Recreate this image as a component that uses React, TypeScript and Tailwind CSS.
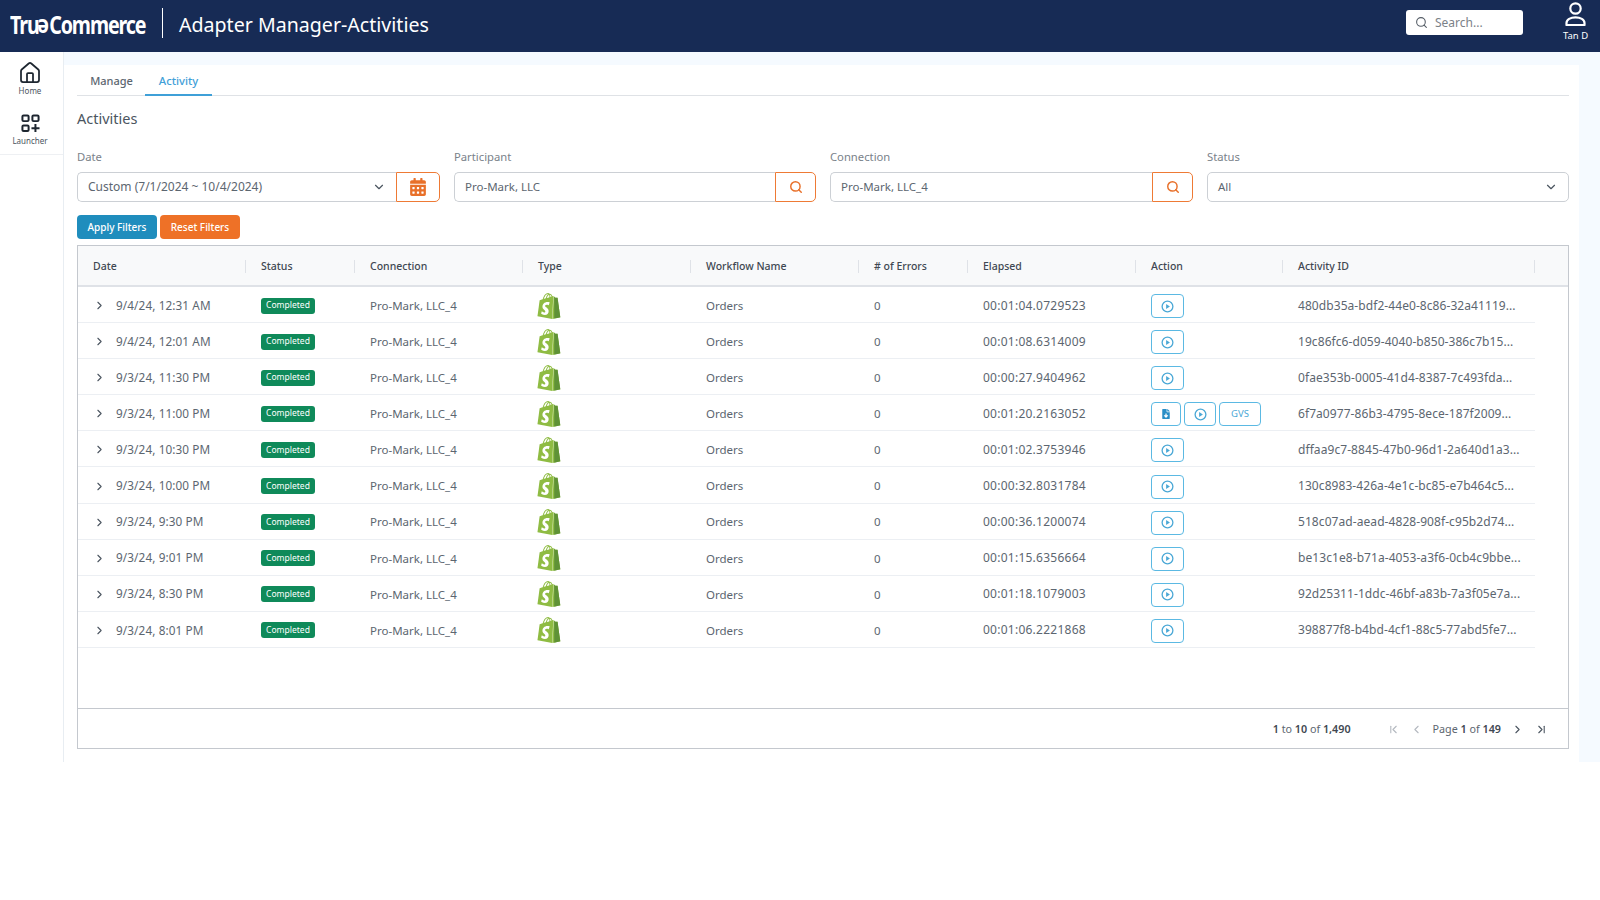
import {
  ChevronDown,
  ChevronFirst,
  ChevronLast,
  ChevronLeft,
  ChevronRight,
  House,
  Search,
} from 'lucide-react';
import { FaCalendarAlt, FaFileDownload } from 'react-icons/fa';
import { SiShopify } from 'react-icons/si';

const COLS = 'grid grid-cols-[168px_109px_168px_168px_168px_109px_168px_147px_252px]';

const HEADERS = [
  'Date',
  'Status',
  'Connection',
  'Type',
  'Workflow Name',
  '# of Errors',
  'Elapsed',
  'Action',
  'Activity ID',
];

const ROWS = [
  { date: '9/4/24, 12:31 AM', elapsed: '00:01:04.0729523', id: '480db35a-bdf2-44e0-8c86-32a41119...' },
  { date: '9/4/24, 12:01 AM', elapsed: '00:01:08.6314009', id: '19c86fc6-d059-4040-b850-386c7b15...' },
  { date: '9/3/24, 11:30 PM', elapsed: '00:00:27.9404962', id: '0fae353b-0005-41d4-8387-7c493fda...' },
  { date: '9/3/24, 11:00 PM', elapsed: '00:01:20.2163052', id: '6f7a0977-86b3-4795-8ece-187f2009...', extra: true },
  { date: '9/3/24, 10:30 PM', elapsed: '00:01:02.3753946', id: 'dffaa9c7-8845-47b0-96d1-2a640d1a3...' },
  { date: '9/3/24, 10:00 PM', elapsed: '00:00:32.8031784', id: '130c8983-426a-4e1c-bc85-e7b464c5...' },
  { date: '9/3/24, 9:30 PM', elapsed: '00:00:36.1200074', id: '518c07ad-aead-4828-908f-c95b2d74...' },
  { date: '9/3/24, 9:01 PM', elapsed: '00:01:15.6356664', id: 'be13c1e8-b71a-4053-a3f6-0cb4c9bbe...' },
  { date: '9/3/24, 8:30 PM', elapsed: '00:01:18.1079003', id: '92d25311-1ddc-46bf-a83b-7a3f05e7a...' },
  { date: '9/3/24, 8:01 PM', elapsed: '00:01:06.2221868', id: '398877f8-b4bd-4cf1-88c5-77abd5fe7...' },
];

function PlayIcon() {
  return (
    <svg viewBox="0 0 14 14" className="h-[13px] w-[13px]" fill="none">
      <circle cx="7" cy="7" r="5.8" stroke="currentColor" strokeWidth="1.4" />
      <path d="M5.5 4.4 9.6 7l-4.1 2.6z" fill="currentColor" />
    </svg>
  );
}

function FilterField({ label, value, width }: { label: string; value: string; width: string }) {
  return (
    <div className={`flex flex-col ${width}`}>
      <label className="mb-[7px] text-[11.25px] leading-[16px] text-[#7a828a]">{label}</label>
      <div className="flex h-[30px]">
        <div className="flex flex-1 items-center rounded-l-[5px] border border-r-0 border-[#ccd0d5] pl-[10px] text-[11.5px] text-[#5c6670]">
          {value}
        </div>
        <button className="flex w-[41px] items-center justify-center rounded-r-[5px] border border-[#ee7a35] text-[#e8702a]">
          <Search className="h-[14px] w-[14px]" strokeWidth={2.5} />
        </button>
      </div>
    </div>
  );
}

function ActionButton({ children, width = 'w-[33px]' }: { children: React.ReactNode; width?: string }) {
  return (
    <button className={`flex h-[24px] ${width} items-center justify-center rounded-[4px] border border-[#5bb9e3] text-[#4ba8d6]`}>
      {children}
    </button>
  );
}

function ShopifyMark() {
  return (
    <span className="relative block h-[26px] w-[26px] -ml-[2px]">
      <SiShopify className="h-[26px] w-[26px] text-[#8fbc43]" />
      <SiShopify className="absolute left-0 top-0 h-[26px] w-[26px] text-[#5f9236] [clip-path:inset(0_0_0_70%)]" />
    </span>
  );
}

function ActivityRow({ row }: { row: (typeof ROWS)[number] }) {
  const cell = 'flex items-center pl-[15px] truncate';
  return (
    <div className={`${COLS} h-[36.1px] w-[1457px] border-b border-[#eceff3] pt-[2px] text-[11.5px] text-[#5c6670]`}>
      <div className="flex items-center pl-[15px]">
        <ChevronRight className="h-[13px] w-[13px] text-[#4b5560]" strokeWidth={2} />
        <span className="ml-[10px] whitespace-nowrap text-[11.75px] tracking-[0.1px]">{row.date}</span>
      </div>
      <div className={cell}>
        <span className="flex h-[16px] w-[54px] items-center justify-center rounded-[3px] bg-[#0f8a5a] text-[8.5px] text-white">
          Completed
        </span>
      </div>
      <div className={cell}>Pro-Mark, LLC_4</div>
      <div className={cell}>
        <ShopifyMark />
      </div>
      <div className={cell}>Orders</div>
      <div className={cell}>0</div>
      <div className={`${cell} text-[12px] tracking-[0.25px]`}>{row.elapsed}</div>
      <div className="flex items-center gap-[3px] pl-[15px] pt-[1px]">
        {row.extra && (
          <ActionButton width="w-[30px]">
            <FaFileDownload className="h-[10px] w-[10px] text-[#2a8fc7]" />
          </ActionButton>
        )}
        <ActionButton width={row.extra ? 'w-[32px]' : 'w-[33px]'}>
          <PlayIcon />
        </ActionButton>
        {row.extra && (
          <ActionButton width="w-[42px]">
            <span className="text-[9.5px]">GVS</span>
          </ActionButton>
        )}
      </div>
      <div className={`${cell} pr-[4px] text-[12px]`}>
        <span className="whitespace-nowrap tracking-[0.07px]">{row.id}</span>
      </div>
    </div>
  );
}

export default function App() {
  return (
    <div className="min-h-[900px] bg-white font-['Noto_Sans',sans-serif]">
      {/* Top bar */}
      <header className="flex h-[52px] items-center bg-[#172b55] pl-[10px] pr-[12px]">
        <div className="mb-[4px] w-[136px] origin-left scale-x-[0.785] font-['Liberation_Sans',sans-serif] text-[25px] font-bold leading-none tracking-[-1.4px] whitespace-nowrap text-white">
          Tru<span className="inline-block translate-y-[4px] rotate-180">e</span>Commerce
        </div>
        <div className="mb-[6px] ml-[16px] h-[30px] w-px bg-white" />
        <h1 className="mb-[3px] ml-[16px] text-[19.6px] text-white">Adapter Manager-Activities</h1>
        <div className="mb-[7px] ml-auto flex h-[25px] w-[117px] items-center rounded-[3px] bg-white pl-[9px]">
          <Search className="h-[13px] w-[13px] text-[#555d66]" />
          <span className="ml-[7px] text-[12px] text-[#7b8188]">Search...</span>
        </div>
        <div className="mb-[9px] ml-[40px] flex w-[25px] flex-col items-center text-white">
          <svg viewBox="0 0 21 24" className="h-[24px] w-[21px]" fill="none" stroke="currentColor" strokeWidth="2.2" strokeLinejoin="round">
            <circle cx="10.5" cy="6.5" r="5.2" />
            <path d="M1.5 23v-2c0-3.4 4-5.6 9-5.6s9 2.2 9 5.6v2z" />
          </svg>
          <span className="mt-[5px] whitespace-nowrap text-[9.5px] leading-[10px]">Tan D</span>
        </div>
      </header>

      <div className="flex h-[710px]">
        {/* Left rail */}
        <nav className="w-[64px] shrink-0 border-r border-[#e8edf2]">
          <div className="flex h-[52px] flex-col items-center pt-[9px] pr-[3px] text-[#1d2630]">
            <House className="h-[24px] w-[24px]" strokeWidth={1.75} />
            <span className="text-[8px] leading-[12px] text-[#4b5560]">Home</span>
          </div>
          <div className="flex h-[51px] flex-col items-center border-b border-[#eef0f3] pt-[10px] pr-[3px] text-[#1d2630]">
            <svg viewBox="0 0 20 20" className="h-[19px] w-[19px]" fill="none" stroke="currentColor" strokeWidth="2.1">
              <rect x="1.5" y="1.5" width="6.5" height="6" rx="1.2" />
              <rect x="12" y="1.5" width="6.5" height="6" rx="1.2" />
              <rect x="1.5" y="12" width="6.5" height="6" rx="1.2" />
              <path d="M15.2 10.5v8.5M11 15h8.5" />
            </svg>
            <span className="mt-[2px] text-[8px] leading-[12px] text-[#4b5560]">Launcher</span>
          </div>
        </nav>

        {/* Main area */}
        <main className="flex min-w-0 flex-1 flex-col bg-[#f5faff] pt-[13px] pr-[21px]">
          <div className="flex-1 bg-white pl-[13px] pr-[10px]">
            <div className="flex h-[31px] border-b border-[#dfe2e6] pl-[1px]">
              <button className="w-[67px] pt-[3px] text-[11px] font-medium text-[#5c6670]">Manage</button>
              <button className="-mb-px w-[67px] border-b-2 border-[#3fa0d8] pt-[4px] text-[11.25px] font-medium text-[#3fa0d8]">
                Activity
              </button>
            </div>
            <h2 className="mt-[12px] text-[14.5px] leading-[20px] text-[#4b5560]">Activities</h2>

            <div className="mt-[21px] flex gap-[14px]">
              <div className="flex w-[363px] flex-col">
                <label className="mb-[7px] text-[11.25px] leading-[16px] text-[#7a828a]">Date</label>
                <div className="flex h-[30px]">
                  <div className="flex flex-1 items-center justify-between rounded-l-[5px] border border-r-0 border-[#ccd0d5] pl-[10px] pr-[10px] text-[12px] text-[#5c6670]">
                    Custom (7/1/2024 ~ 10/4/2024)
                    <ChevronDown className="h-[14px] w-[14px] text-[#4b5560]" />
                  </div>
                  <button className="flex w-[44px] items-center justify-center rounded-r-[5px] border border-[#ee7a35] text-[#e8702a]">
                    <FaCalendarAlt className="h-[18px] w-[16px]" />
                  </button>
                </div>
              </div>
              <FilterField label="Participant" value="Pro-Mark, LLC" width="w-[362px]" />
              <FilterField label="Connection" value="Pro-Mark, LLC_4" width="w-[363px]" />
              <div className="flex min-w-0 flex-1 flex-col">
                <label className="mb-[7px] text-[11.25px] leading-[16px] text-[#7a828a]">Status</label>
                <div className="flex h-[30px] items-center justify-between rounded-[5px] border border-[#ccd0d5] pl-[10px] pr-[10px] text-[11.5px] text-[#5c6670]">
                  All
                  <ChevronDown className="h-[14px] w-[14px] text-[#4b5560]" />
                </div>
              </div>
            </div>

            <div className="mt-[13px] flex gap-[3px]">
              <button className="h-[24px] w-[80px] rounded-[4px] bg-[#1f8dbd] text-[10px] font-medium text-white">Apply Filters</button>
              <button className="h-[24px] w-[80px] rounded-[4px] bg-[#ee7127] text-[10px] font-medium text-white">Reset Filters</button>
            </div>

            {/* Activity table */}
            <div className="mt-[6px] flex h-[504px] w-[1492px] flex-col border border-[#c4c8ce]">
              <div className={`${COLS} h-[41px] shrink-0 border-b-2 border-[#dfe2e7] bg-[#f8f9fa]`}>
                {HEADERS.map((h) => (
                  <div key={h} className="relative flex items-center pl-[15px] pt-[2px] text-[10.5px] font-medium text-[#3f4852]">
                    {h}
                    <span className="absolute right-0 top-[14px] h-[13px] w-px bg-[#dfe2e7]" />
                  </div>
                ))}
              </div>
              <div className="flex-1">
                {ROWS.map((row) => (
                  <ActivityRow key={row.id} row={row} />
                ))}
              </div>
              <div className="flex h-[40px] shrink-0 items-center justify-end border-t border-[#c4c8ce] pt-[1px] pr-[20px] text-[10.75px] text-[#5c6670]">
                <span><b className="font-semibold text-[#3f4852]">1</b> to <b className="font-semibold text-[#3f4852]">10</b> of <b className="font-semibold text-[#3f4852]">1,490</b></span>
                <ChevronFirst className="ml-[36px] h-[13px] w-[13px] text-[#b4b9c0]" />
                <ChevronLeft className="ml-[10px] h-[13px] w-[13px] text-[#b4b9c0]" />
                <span className="ml-[10px]">Page <b className="font-semibold text-[#3f4852]">1</b> of <b className="font-semibold text-[#3f4852]">149</b></span>
                <ChevronRight className="ml-[10px] h-[13px] w-[13px] text-[#4b5560]" />
                <ChevronLast className="ml-[11px] h-[13px] w-[13px] text-[#4b5560]" />
              </div>
            </div>
          </div>
        </main>
      </div>
    </div>
  );
}
